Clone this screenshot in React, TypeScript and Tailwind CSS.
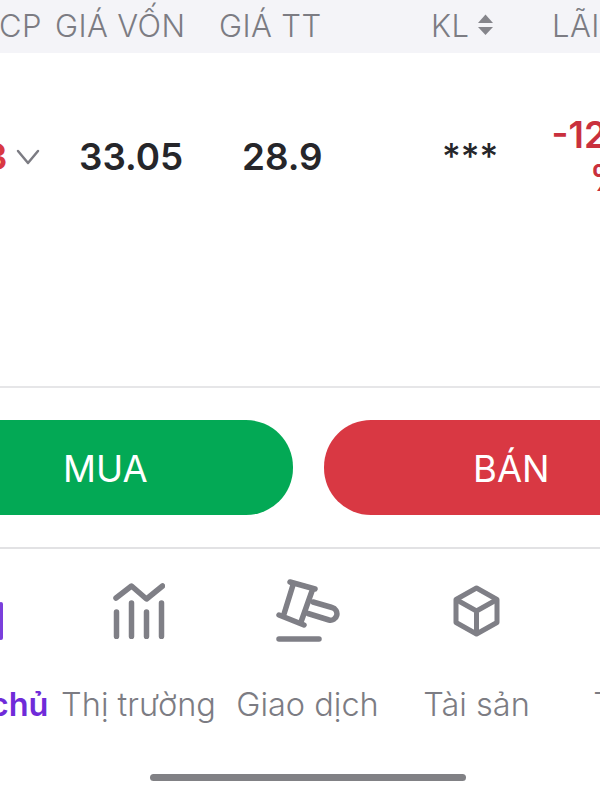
const font = "font-['Inter','Noto_Sans',sans-serif]";

function SortIcon() {
    return (
        <svg width="17" height="24" viewBox="0 0 17 24" className="-mt-[3px] text-[#85858b]" fill="currentColor">
            <path d="M8.5 1.5L16 10H1z" />
            <path d="M1 14h15l-7.5 8z" />
        </svg>
    );
}

function HomeIcon() {
    return (
        <svg width="68" height="64" viewBox="0 0 68 64" fill="none" stroke="#7a3fdc" strokeWidth="4" strokeLinecap="round" strokeLinejoin="round">
            <path d="M32 3L58 19M65 25V59M58 63H32" />
        </svg>
    );
}

function MarketIcon() {
    return (
        <svg width="52" height="56" viewBox="0 0 52 56" fill="none" stroke="#7f7f86" strokeWidth="5.5" strokeLinecap="round" strokeLinejoin="round">
            <path d="M3 15L18.5 3L33.5 16L49.5 3" />
            <path d="M3.5 29V53.5M18.5 20V53.5M33.5 29V53.5M48.5 20V53.5" />
        </svg>
    );
}

function GavelIcon() {
    return (
        <svg width="64" height="64" viewBox="0 0 64 64" fill="none" stroke="#7f7f86" strokeWidth="5.5" strokeLinecap="round" strokeLinejoin="round">
            <path d="M14 3L39 10M3 36L28 46" />
            <path d="M17 6L8 35M36 12L25 43" />
            <path d="M37 23L56 28.5A6.3 6.3 0 0 1 53 41L32 34.5" />
            <path d="M3 60H43" />
        </svg>
    );
}

function BoxIcon() {
    return (
        <svg width="47" height="52" viewBox="0 0 47 52" fill="none" stroke="#7f7f86" strokeWidth="5" strokeLinejoin="round">
            <path d="M23.5 3L44 14.5V37.5L23.5 49L3 37.5V14.5z" />
            <path d="M3 14.5L23.5 26L44 14.5M23.5 26V49" />
        </svg>
    );
}

const tabs = [
    { label: "Trang chủ", icon: <HomeIcon />, active: true },
    { label: "Thị trường", icon: <MarketIcon /> },
    { label: "Giao dịch", icon: <GavelIcon /> },
    { label: "Tài sản", icon: <BoxIcon /> },
    { label: "Tin tức", icon: null },
];

export default function App() {
    return (
        <div className={`w-[600px] h-[800px] overflow-hidden bg-white flex flex-col ${font}`}>
            {/* Table header */}
            <div className="h-[53px] shrink-0 bg-[#f4f4f8] flex items-center text-[31px] font-light tracking-[0.4px] text-[#7c7c83] whitespace-nowrap">
                <div className="w-[56px] shrink-0 -ml-px">CP</div>
                <div className="w-[164px] shrink-0">GIÁ VỐN</div>
                <div className="w-[212px] shrink-0">GIÁ TT</div>
                <div className="w-[121px] shrink-0 flex items-center gap-2">
                    KL
                    <SortIcon />
                </div>
                <div className="shrink-0">LÃI</div>
            </div>

            {/* Position row */}
            <div className="h-[335px] shrink-0 border-b-2 border-[#e6e6e8] whitespace-nowrap">
                <div className="h-[208px] flex items-center text-[36.8px] font-semibold text-[#26262a]">
                    <div className="w-[79px] shrink-0 flex items-center">
                        <span className="-ml-[16px] w-[32px] shrink-0 text-[#d93843]">3</span>
                        <svg width="24" height="16" viewBox="0 0 24 16" fill="none" stroke="#7c7c83" strokeWidth="2.5" strokeLinecap="round" strokeLinejoin="round">
                            <path d="M2 2L12 14L22 2" />
                        </svg>
                    </div>
                    <div className="w-[163px] shrink-0">33.05</div>
                    <div className="w-[200px] shrink-0">28.9</div>
                    <div className="w-[108px] shrink-0 -mt-[2px] text-[36px] font-medium">***</div>
                    <div className="w-[116px] shrink-0 text-center text-[#c9303d] text-[36.5px] leading-[43px]">
                        <div>-12.56</div>
                        <div>%</div>
                    </div>
                </div>
            </div>

            {/* Buy / sell */}
            <div className="h-[161px] shrink-0 border-b-2 border-[#e2e2e4] flex items-center">
                <button className="w-[293px] h-[95px] shrink-0 rounded-r-[47px] bg-[#03a955] text-white text-[36.5px] pl-[63px] pt-[3px] text-left">MUA</button>
                <button className="w-[276px] h-[95px] shrink-0 ml-[31px] rounded-l-[47px] bg-[#d93843] text-white text-[36.5px] pl-[149px] pt-[3px] text-left">BÁN</button>
            </div>

            {/* Tab bar */}
            <div className="flex-1 flex flex-col whitespace-nowrap">
                <div className="flex -ml-[115px] mt-[30px]">
                    {tabs.map((tab) => (
                        <div key={tab.label} className="w-[169px] shrink-0 flex flex-col items-center">
                            <div className="h-[64px] flex items-center justify-center">{tab.icon}</div>
                            <div className={`mt-[40px] text-[32.5px] leading-[44px] ${tab.active ? "font-semibold text-[#6f2bd9]" : "font-light text-[#7c7c83]"}`}>
                                {tab.label}
                            </div>
                        </div>
                    ))}
                </div>
                <div className="w-[316px] h-[7px] ml-[150px] mt-[47px] rounded-full bg-[#818185]" />
            </div>
        </div>
    );
}
